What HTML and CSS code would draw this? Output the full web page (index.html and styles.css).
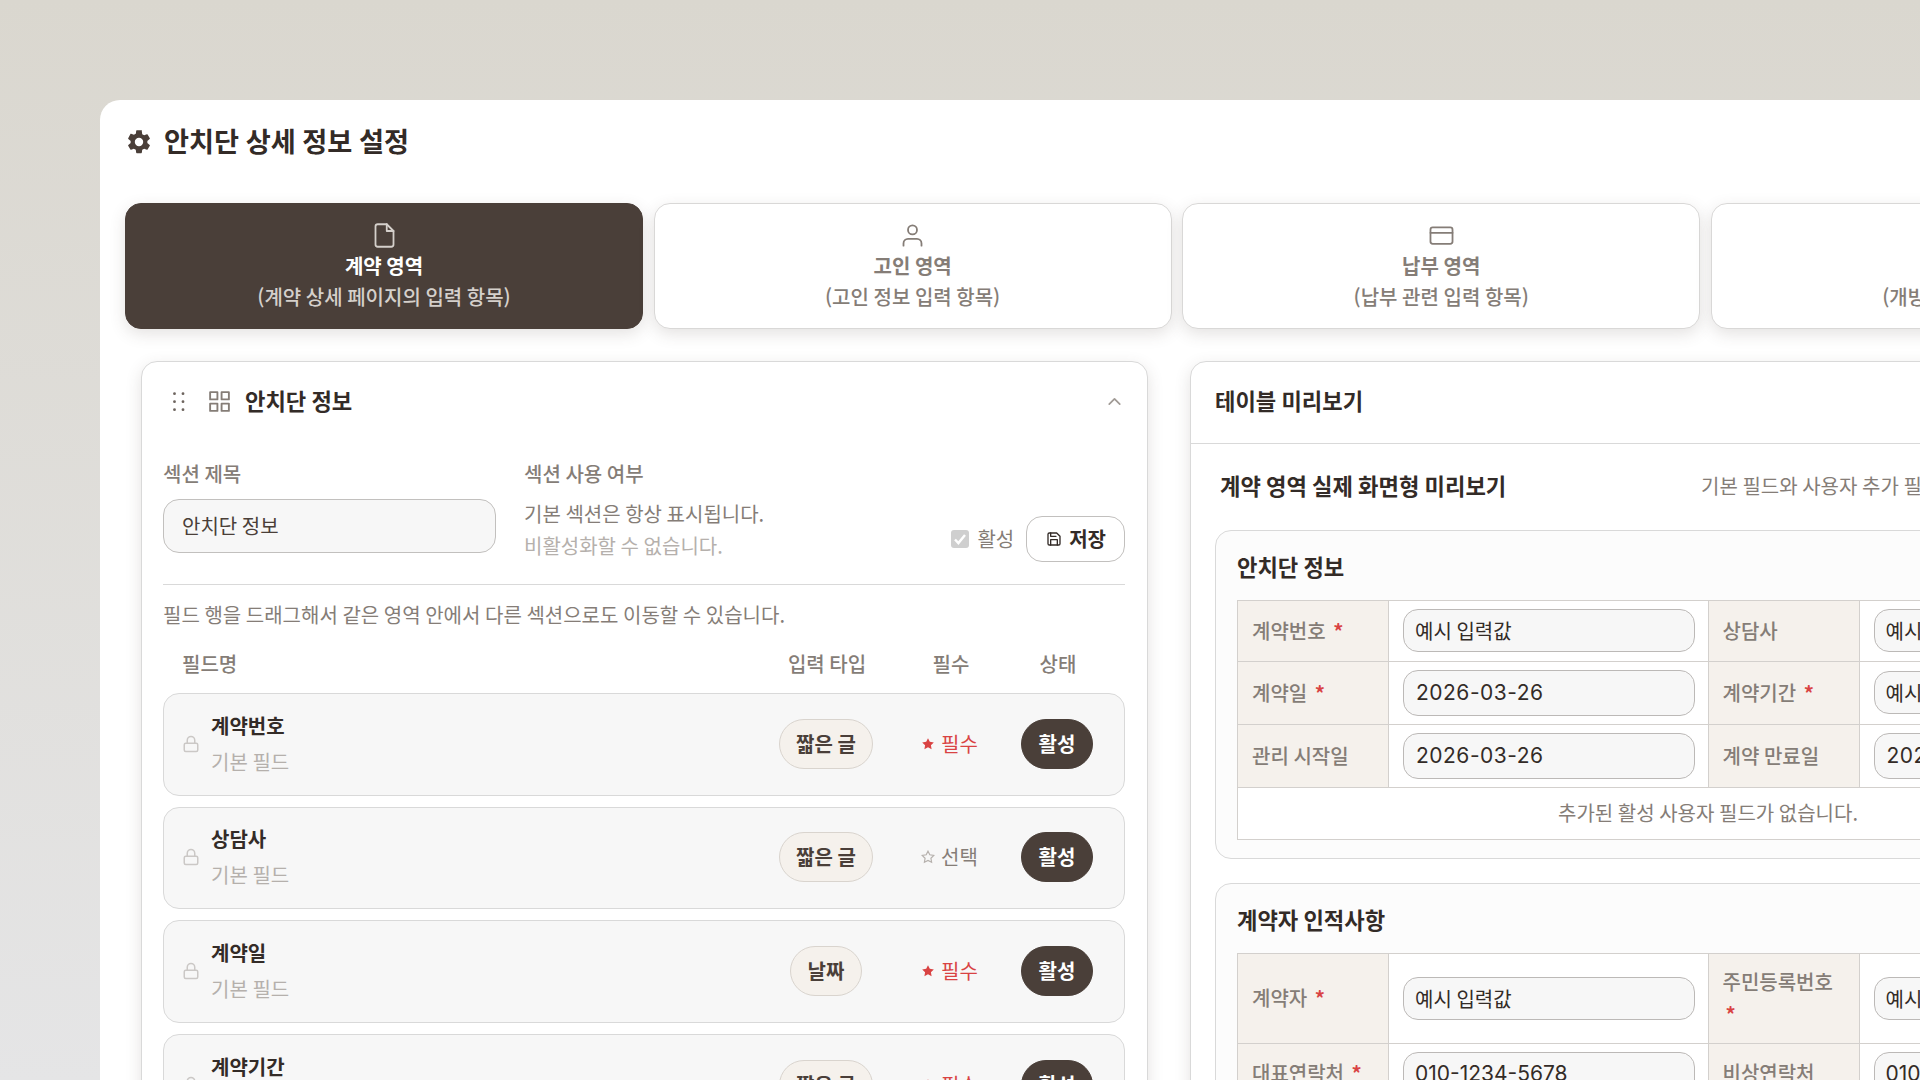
FILE: index.html
```html
<!DOCTYPE html>
<html lang="ko">
<head>
    <meta charset="UTF-8">
    <meta name="viewport" content="width=device-width, initial-scale=1.0">
    <title>안치단 상세 정보 설정</title>
    <link rel="stylesheet" href="styles.css">
</head>
<body>
    <svg class="sprite">
        <symbol id="lock" viewBox="0 0 24 24">
            <rect x="3" y="11" width="18" height="11" rx="2"/>
            <path d="M7 11V7a5 5 0 0 1 10 0v4"/>
        </symbol>
        <symbol id="star" viewBox="0 0 24 24">
            <path d="M12 2l3.09 6.26L22 9.27l-5 4.87 1.18 6.88L12 17.77l-6.18 3.25L7 14.14 2 9.27l6.91-1.01z"/>
        </symbol>
    </svg>
    <main class="panel">
        <header class="page-title">
            <svg class="icon-gear" viewBox="0 0 24 24"><path d="M19.14 12.94c.04-.3.06-.61.06-.94s-.02-.64-.07-.94l2.03-1.58c.18-.14.23-.41.12-.61l-1.92-3.32c-.12-.22-.37-.29-.59-.22l-2.39.96c-.5-.38-1.03-.7-1.62-.94l-.36-2.54A.48.48 0 0 0 13.92 2h-3.84c-.24 0-.43.17-.47.41l-.36 2.54c-.59.24-1.13.57-1.62.94l-2.39-.96c-.22-.08-.47 0-.59.22L2.74 8.87c-.12.21-.08.47.12.61l2.03 1.58c-.05.3-.09.63-.09.94s.02.64.07.94l-2.03 1.58c-.18.14-.23.41-.12.61l1.92 3.32c.12.22.37.29.59.22l2.39-.96c.5.38 1.03.7 1.62.94l.36 2.54c.05.24.24.41.48.41h3.84c.24 0 .44-.17.47-.41l.36-2.54c.59-.24 1.13-.56 1.62-.94l2.39.96c.22.08.47 0 .59-.22l1.92-3.32c.12-.22.07-.47-.12-.61zM12 15.6A3.6 3.6 0 1 1 12 8.4a3.6 3.6 0 0 1 0 7.2z"/></svg>
            <h1>안치단 상세 정보 설정</h1>
        </header>

        <nav class="tabs">
            <button class="tab active">
                <svg class="icon" viewBox="0 0 24 24"><path d="M14 2H6a2 2 0 0 0-2 2v16a2 2 0 0 0 2 2h12a2 2 0 0 0 2-2V8z"/><path d="M14 2v6h6"/></svg>
                <strong>계약 영역</strong>
                <span>(계약 상세 페이지의 입력 항목)</span>
            </button>
            <button class="tab">
                <svg class="icon" viewBox="0 0 24 24"><path d="M20 21v-2a4 4 0 0 0-4-4H8a4 4 0 0 0-4 4v2"/><circle cx="12" cy="7" r="4"/></svg>
                <strong>고인 영역</strong>
                <span>(고인 정보 입력 항목)</span>
            </button>
            <button class="tab">
                <svg class="icon" viewBox="0 0 24 24"><rect x="2.2" y="4.8" width="19.6" height="14.6" rx="2"/><path d="M2.2 9.6h19.6"/></svg>
                <strong>납부 영역</strong>
                <span>(납부 관련 입력 항목)</span>
            </button>
            <button class="tab">
                <svg class="icon" viewBox="0 0 24 24"><rect x="3" y="3" width="18" height="18" rx="2"/></svg>
                <strong>개방 영역</strong>
                <span>(개방 관련 입력 항목)</span>
            </button>
        </nav>

        <div class="columns">
            <section class="card editor">
                <div class="editor-head">
                    <svg class="icon-drag" viewBox="0 0 12 20"><circle cx="1.5" cy="1.7" r="1.4"/><circle cx="10" cy="1.7" r="1.4"/><circle cx="1.5" cy="9.7" r="1.4"/><circle cx="10" cy="9.7" r="1.4"/><circle cx="1.5" cy="17.7" r="1.4"/><circle cx="10" cy="17.7" r="1.4"/></svg>
                    <svg class="icon icon-grid" viewBox="0 0 24 24"><rect x="3" y="3" width="7" height="7"/><rect x="14" y="3" width="7" height="7"/><rect x="14" y="14" width="7" height="7"/><rect x="3" y="14" width="7" height="7"/></svg>
                    <h2>안치단 정보</h2>
                    <svg class="icon icon-chevron" viewBox="0 0 24 24"><path d="M18 15l-6-6-6 6"/></svg>
                </div>

                <div class="section-form">
                    <div class="form-title">
                        <label>섹션 제목</label>
                        <input type="text" class="input" value="안치단 정보">
                    </div>
                    <div class="form-use">
                        <label>섹션 사용 여부</label>
                        <p>기본 섹션은 항상 표시됩니다.</p>
                        <p class="faint">비활성화할 수 없습니다.</p>
                    </div>
                    <div class="form-actions">
                        <span class="checkbox"><svg viewBox="0 0 18 18"><path d="M4 9.5l3.4 3.6L14 5"/></svg></span>
                        <span class="check-text">활성</span>
                        <button class="btn-save">
                            <svg class="icon" viewBox="0 0 24 24"><path d="M19 21H5a2 2 0 0 1-2-2V5a2 2 0 0 1 2-2h11l5 5v11a2 2 0 0 1-2 2z"/><path d="M17 21v-8H7v8M7 3v5h8"/></svg>
                            저장
                        </button>
                    </div>
                </div>

                <p class="hint">필드 행을 드래그해서 같은 영역 안에서 다른 섹션으로도 이동할 수 있습니다.</p>

                <div class="field-head">
                    <span>필드명</span>
                    <span>입력 타입</span>
                    <span>필수</span>
                    <span>상태</span>
                </div>
                <div class="field-list">
                    <div class="field-row">
                        <svg class="icon icon-lock"><use href="#lock"/></svg>
                        <div class="field-name"><strong>계약번호</strong><span>기본 필드</span></div>
                        <div><span class="pill">짧은 글</span></div>
                        <div class="required"><svg><use href="#star"/></svg>필수</div>
                        <div><span class="pill pill-on">활성</span></div>
                    </div>
                    <div class="field-row">
                        <svg class="icon icon-lock"><use href="#lock"/></svg>
                        <div class="field-name"><strong>상담사</strong><span>기본 필드</span></div>
                        <div><span class="pill">짧은 글</span></div>
                        <div class="optional"><svg><use href="#star"/></svg>선택</div>
                        <div><span class="pill pill-on">활성</span></div>
                    </div>
                    <div class="field-row">
                        <svg class="icon icon-lock"><use href="#lock"/></svg>
                        <div class="field-name"><strong>계약일</strong><span>기본 필드</span></div>
                        <div><span class="pill">날짜</span></div>
                        <div class="required"><svg><use href="#star"/></svg>필수</div>
                        <div><span class="pill pill-on">활성</span></div>
                    </div>
                    <div class="field-row">
                        <svg class="icon icon-lock"><use href="#lock"/></svg>
                        <div class="field-name"><strong>계약기간</strong><span>기본 필드</span></div>
                        <div><span class="pill">짧은 글</span></div>
                        <div class="required"><svg><use href="#star"/></svg>필수</div>
                        <div><span class="pill pill-on">활성</span></div>
                    </div>
                </div>
            </section>

            <section class="card preview">
                <div class="preview-head"><h2>테이블 미리보기</h2></div>
                <div class="preview-body">
                    <div class="preview-title">
                        <h2>계약 영역 실제 화면형 미리보기</h2>
                        <span>기본 필드와 사용자 추가 필드를 실제 화면처럼 표시합니다.</span>
                    </div>

                    <div class="box">
                        <h3>안치단 정보</h3>
                        <table>
                            <tr>
                                <th>계약번호 <i>*</i></th>
                                <td><input type="text" value="예시 입력값"></td>
                                <th>상담사</th>
                                <td><input type="text" value="예시 입력값"></td>
                            </tr>
                            <tr class="row-date">
                                <th>계약일 <i>*</i></th>
                                <td><input type="text" class="date" value="2026-03-26"></td>
                                <th>계약기간 <i>*</i></th>
                                <td><input type="text" value="예시 입력값"></td>
                            </tr>
                            <tr class="row-date">
                                <th>관리 시작일</th>
                                <td><input type="text" class="date" value="2026-03-26"></td>
                                <th>계약 만료일</th>
                                <td><input type="text" class="date" value="2026-03-26"></td>
                            </tr>
                            <tr class="row-empty">
                                <td colspan="4">추가된 활성 사용자 필드가 없습니다.</td>
                            </tr>
                        </table>
                    </div>

                    <div class="box">
                        <h3>계약자 인적사항</h3>
                        <table>
                            <tr class="row-tall">
                                <th>계약자 <i>*</i></th>
                                <td><input type="text" value="예시 입력값"></td>
                                <th>주민등록번호 <i>*</i></th>
                                <td><input type="text" value="예시 입력값"></td>
                            </tr>
                            <tr>
                                <th>대표연락처 <i>*</i></th>
                                <td><input type="text" class="phone" value="010-1234-5678"></td>
                                <th>비상연락처</th>
                                <td><input type="text" class="phone" value="010-1234-5678"></td>
                            </tr>
                        </table>
                    </div>
                </div>
            </section>
        </div>
    </main>
</body>
</html>
```
FILE: styles.css
```css
*{
    box-sizing: border-box;
}
body{
    margin: 0;
    height: 1080px;
    padding: 100px 0 0 100px;
    overflow: hidden;
    background: linear-gradient(180deg, #dad7cf 0%, #e5e5e6 100%);
    font-family: "Noto Sans CJK KR", sans-serif;
    font-size: 20px;
    line-height: 32px;
    word-spacing: -1px;
    color: #332b27;
}
h1, h2, h3, p{
    margin: 0;
}
button, input{
    font: inherit;
    color: inherit;
    word-spacing: inherit;
}
.sprite{
    display: none;
}
.icon{
    fill: none;
    stroke: currentColor;
    stroke-width: 2;
    stroke-linecap: round;
    stroke-linejoin: round;
}
.panel{
    width: 2154px;
    height: 980px;
    padding: 0 25px;
    overflow: hidden;
    background: #fff;
    border-radius: 20px 20px 0 0;
}

/* title */
.page-title{
    display: flex;
    align-items: center;
    gap: 11px;
    height: 102.5px;
    padding: 0 0 18px 0;
}
.page-title h1{
    padding-bottom: 4px;
    font-size: 27.2px;
    font-weight: 700;
}
.icon-gear{
    width: 28px;
    height: 28px;
    fill: #4a3f39;
}

/* tabs */
.tabs{
    display: grid;
    grid-template-columns: repeat(4, 518px);
    gap: 10.6px;
}
.tab{
    display: flex;
    flex-direction: column;
    align-items: center;
    height: 126.5px;
    padding: 18px 0 0;
    border: 1px solid #d9d8d7;
    border-radius: 16px;
    background: #fff;
    color: #857d77;
    line-height: 31px;
    box-shadow: 0 5px 16px rgba(74, 63, 57, 0.15);
}
.tab .icon{
    width: 27px;
    height: 27px;
    margin-bottom: 1px;
    stroke-width: 1.6;
}
.tab strong{
    font-weight: 700;
}
.tab span{
    font-weight: 500;
}
.tab.active{
    background: #4a3f39;
    border-color: #4a3f39;
    color: #fff;
}
.tab.active span, .tab.active .icon{
    color: #d5d0cb;
}

/* cards */
.columns{
    display: flex;
    align-items: flex-start;
    gap: 42px;
    padding: 32px 0 0 16px;
}
.card{
    flex: none;
    height: 1000px;
    border: 1px solid #d9d9d9;
    border-radius: 16px;
    background: #fff;
    box-shadow: 0 5px 16px rgba(74, 63, 57, 0.15);
}
.card h2{
    padding-bottom: 3px;
    font-size: 22.2px;
    font-weight: 700;
}
.editor{
    width: 1007px;
    padding: 0 22px 0 21px;
}
.editor-head{
    display: flex;
    align-items: center;
    height: 80px;
    padding: 0 0 1px 10px;
    color: #857d77;
}
.editor-head h2{
    flex: 1;
    color: #332b27;
}
.icon-drag{
    width: 12px;
    height: 20px;
    margin-right: 22px;
    fill: #6d645e;
}
.icon-grid{
    width: 25px;
    height: 25px;
    margin-right: 13px;
    stroke-width: 1.8;
}
.icon-chevron{
    width: 21px;
    height: 21px;
    color: #a09a95;
}

.section-form{
    display: flex;
    height: 143px;
    padding-top: 16px;
    border-bottom: 1px solid #d9d9d9;
    color: #857d77;
}
.section-form label{
    display: block;
    font-weight: 500;
}
.form-title{
    width: 361px;
}
.input{
    width: 333px;
    height: 54px;
    margin-top: 9px;
    padding: 0 18px 2px;
    border: 1px solid #c2c0be;
    border-radius: 16px;
    background: #f7f7f7;
    color: #4a3f39;
}
.form-use{
    flex: 1;
}
.form-use label{
    margin-bottom: 8px;
}
.faint{
    color: #b5b0ac;
}
.form-actions{
    display: flex;
    align-items: center;
    height: 46px;
    margin-top: 58px;
}
.checkbox{
    display: flex;
    width: 18px;
    height: 18px;
    margin-right: 8px;
    border-radius: 3px;
    background: #cfcfcf;
}
.checkbox svg{
    fill: none;
    stroke: #fff;
    stroke-width: 2.4;
}
.btn-save{
    display: flex;
    align-items: center;
    gap: 7px;
    height: 46px;
    margin-left: 12px;
    padding: 0 18px 0 19px;
    border: 1px solid #c2c0be;
    border-radius: 16px;
    background: #fff;
    color: #332b27;
    font-weight: 700;
}
.btn-save .icon{
    width: 16px;
    height: 16px;
}
.hint{
    margin-top: 14px;
    color: #857d77;
}

/* field list */
.field-head, .field-row{
    display: grid;
    grid-template-columns: 1fr 150px 98px 116px;
    align-items: center;
    text-align: center;
}
.field-head{
    height: 62px;
    padding: 3px 9px 0 19px;
    color: #857d77;
    font-weight: 500;
}
.field-head span:first-child{
    text-align: left;
}
.field-list{
    display: grid;
    gap: 10.8px;
}
.field-row{
    grid-template-columns: 29px 1fr 150px 98px 116px;
    height: 102.8px;
    padding: 0 9px 1px 18px;
    border: 1px solid #d9d9d9;
    border-radius: 16px;
    background: #f7f7f7;
}
.icon-lock{
    width: 18px;
    height: 18px;
    color: #cbc8c6;
}
.field-name{
    display: grid;
    gap: 4px;
    text-align: left;
}
.field-name strong{
    font-weight: 600;
}
.field-name span{
    color: #b5b0ac;
}
.pill{
    display: inline-block;
    padding: 8px 16.5px;
    border: 1px solid #d9d4ce;
    border-radius: 25px;
    background: #f5f1ec;
    color: #4a3f39;
    font-weight: 600;
}
.pill-on{
    border-color: #4a3f39;
    background: #4a3f39;
    color: #fff;
    font-weight: 700;
}
.required, .optional{
    display: flex;
    align-items: center;
    justify-content: center;
    gap: 6px;
    padding-right: 1px;
    color: #d94343;
}
.required svg, .optional svg{
    width: 14px;
    height: 14px;
    fill: #d94343;
}
.optional{
    color: #857d77;
}
.optional svg{
    fill: none;
    stroke: #b5b0ac;
    stroke-width: 2;
}

/* preview */
.preview{
    width: 1038px;
}
.preview-head{
    display: flex;
    align-items: center;
    height: 82px;
    padding: 0 0 2px 24px;
    border-bottom: 1px solid #d9d9d9;
}
.preview-body{
    padding: 0 24px;
}
.preview-title{
    display: flex;
    align-items: center;
    justify-content: space-between;
    height: 86px;
    padding: 0 6px 2px 5px;
    color: #857d77;
}
.preview-title h2{
    color: #332b27;
}
.preview-title span{
    width: 496px;
    padding-bottom: 1px;
    white-space: nowrap;
}
.box{
    margin-bottom: 24px;
    padding: 19px 21px 18px;
    border: 1px solid #d9d9d9;
    border-radius: 16px;
    background: #fcfcfc;
}
.box h3{
    margin-bottom: 18px;
    font-size: 22.2px;
    font-weight: 700;
}
table{
    width: 942px;
    table-layout: fixed;
    border-collapse: collapse;
    background: #fff;
}
th, td{
    border: 1px solid #d3d0cd;
    padding: 0 14px;
}
th{
    width: 151px;
    background: #f5f1ec;
    color: #857d77;
    font-weight: 500;
    text-align: left;
}
th i{
    margin-left: 3px;
    color: #d94343;
    font-style: normal;
    font-weight: 700;
}
tr{
    height: 60.5px;
}
.row-date{
    height: 63.3px;
}
.row-tall{
    height: 90px;
}
.row-empty{
    height: 51.5px;
    color: #857d77;
    text-align: center;
}
td input{
    display: block;
    width: 292px;
    height: 43px;
    padding: 0 11px;
    border: 1px solid #bcb9b7;
    border-radius: 15px;
    background: #f7f7f7;
}
td .date, td .phone{
    font-family: Inter, sans-serif;
    font-size: 21px;
}
td .date{
    height: 46px;
    padding-left: 12px;
    letter-spacing: 0.5px;
}
```
